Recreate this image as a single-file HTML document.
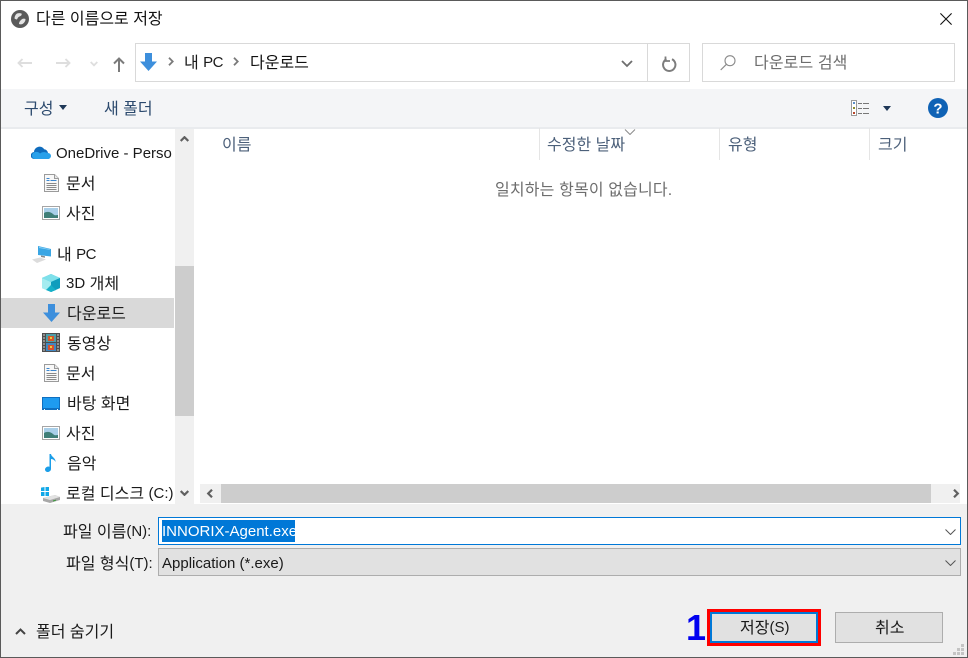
<!DOCTYPE html>
<html lang="ko"><head><meta charset="utf-8"><title>다른 이름으로 저장</title>
<style>
html,body{margin:0;padding:0;background:#fff}
#w{position:relative;width:968px;height:658px;overflow:hidden;background:#fff;font-family:"Liberation Sans","Noto Sans CJK KR",sans-serif;font-size:16px;color:#1a1a1a}
#w div,#w svg{position:absolute}
.t{white-space:nowrap;line-height:20px;height:20px}
.g{color:#6d6d6d}
.h{color:#4c607a}
.l{font-size:15px;position:relative;top:-1px}
</style></head><body><div id="w">
<!-- panels -->
<div style="left:0;top:89px;width:968px;height:38px;background:#f4f5f7"></div>
<div style="left:0;top:127px;width:968px;height:2px;background:#e9ebee"></div>
<div style="left:1px;top:504px;width:966px;height:153px;background:#f0f0f0"></div>
<!-- window border -->
<div style="left:0;top:0;width:966px;height:656px;border:1px solid #5a5a5a;z-index:9"></div>

<!-- title -->
<svg style="left:11px;top:10px" width="18" height="18" viewBox="0 0 18 18"><circle cx="9" cy="9" r="9" fill="#5a5a5a"/><path d="M6 3.500c1.500-.5 3-.5 4.500 0 .5 1 0 2-1 2.500S7 7 6.500 8.500 5 9.500 3.500 8.500C3.500 6.500 4.500 4.500 6 3.500zM14.500 9c0 2-1 3.800-3 5-1 .5-2.500.5-3.500 0 0-1.500.5-2.500 1.500-3.500S12 8 14.500 9z" fill="#e4e4e4"/></svg>
<div class="t" style="left:36px;top:10px;color:#111">다른 이름으로 저장</div>
<svg style="left:940px;top:13px" width="12" height="12" viewBox="0 0 12 12"><path d="M.4.400l11.200 11.200M11.600.400L.4 11.600" stroke="#111" stroke-width="1.100" fill="none"/></svg>

<!-- nav -->
<svg style="left:17px;top:58px" width="15" height="10" viewBox="0 0 15 10"><path d="M15 5H1.500M5.500 1L1.500 5l4 4" stroke="#dedede" stroke-width="1.900" fill="none"/></svg>
<svg style="left:56px;top:58px" width="15" height="10" viewBox="0 0 15 10"><path d="M0 5h13.500M9.500 1l4 4-4 4" stroke="#dedede" stroke-width="1.900" fill="none"/></svg>
<svg style="left:90px;top:61px" width="8" height="6" viewBox="0 0 8 6"><path d="M.7 1L4 4.300 7.300 1" stroke="#dedede" stroke-width="1.800" fill="none"/></svg>
<svg style="left:113px;top:57px" width="12" height="15" viewBox="0 0 12 15"><path d="M6 15V1.500M1 6.500l5-5 5 5" stroke="#7b7b7b" stroke-width="2" fill="none"/></svg>

<!-- address -->
<div style="left:135px;top:43px;width:553px;height:37px;border:1px solid #d9d9d9"></div>
<div style="left:647px;top:43px;width:1px;height:38px;background:#d9d9d9"></div>
<svg style="left:140px;top:53px" width="17" height="18" viewBox="0 0 17 18"><path d="M5 0h7v8.500h5L8.500 18 0 8.500h5z" fill="#3d8fdc"/></svg>
<svg style="left:168px;top:57px" width="6" height="9" viewBox="0 0 6 9"><path d="M1 .8l3.700 3.700L1 8.200" stroke="#7a7a7a" stroke-width="1.800" fill="none"/></svg>
<div class="t" style="left:184px;top:54px">내 <span class="l" style="letter-spacing:-.5px">PC</span></div>
<svg style="left:233px;top:57px" width="6" height="9" viewBox="0 0 6 9"><path d="M1 .8l3.700 3.700L1 8.200" stroke="#7a7a7a" stroke-width="1.800" fill="none"/></svg>
<div class="t" style="left:250px;top:54px;color:#111">다운로드</div>
<svg style="left:621px;top:60px" width="12" height="8" viewBox="0 0 12 8"><path d="M1 1l5 5 5-5" stroke="#6e6e6e" stroke-width="1.800" fill="none"/></svg>
<svg style="left:662px;top:56px" width="15" height="16" viewBox="0 0 15 16"><path d="M4.500 3.200A6.200 6.200 0 1 0 10 3.200" stroke="#7d7d7d" stroke-width="2" fill="none"/><path d="M3.500.5v4.500h4.500" stroke="#7d7d7d" stroke-width="1.800" fill="none"/></svg>

<!-- search -->
<div style="left:702px;top:43px;width:251px;height:37px;border:1px solid #d9d9d9"></div>
<svg style="left:720px;top:55px" width="16" height="16" viewBox="0 0 16 16"><circle cx="10" cy="5.700" r="5" stroke="#8a8a8a" stroke-width="1.100" fill="none"/><path d="M6.400 9.300L.7 15" stroke="#8a8a8a" stroke-width="1.200"/></svg>
<div class="t g" style="left:754px;top:54px;letter-spacing:.1px">다운로드 검색</div>

<!-- toolbar -->
<div class="t" style="left:24px;top:100px;color:#2c4a6e">구성</div>
<svg style="left:59px;top:105px" width="8" height="5" viewBox="0 0 8 5"><path d="M0 0h8L4 5z" fill="#1f3858"/></svg>
<div class="t" style="left:104px;top:100px;color:#2c4a6e">새 폴더</div>
<svg style="left:851px;top:100px" width="19" height="16" viewBox="0 0 19 16"><rect x=".5" y=".5" width="5" height="15" fill="#fff" stroke="#9a9a9a"/><rect x="2" y="2" width="2" height="2" fill="#5b8fc7"/><rect x="2" y="7" width="2" height="2" fill="#8c8c2a"/><rect x="2" y="12" width="2" height="2" fill="#b8452a"/><path d="M7 3.500h4M12 3.500h6M7 8.500h4M12 8.500h6M7 13.500h4M12 13.500h6" stroke="#777"/></svg>
<svg style="left:883px;top:106px" width="8" height="5" viewBox="0 0 8 5"><path d="M0 0h8L4 5z" fill="#1f3858"/></svg>
<svg style="left:928px;top:98px" width="20" height="20" viewBox="0 0 20 20"><circle cx="10" cy="10" r="10" fill="#0f62b5"/><text x="10" y="15.500" text-anchor="middle" font-family="Liberation Sans" font-weight="700" font-size="15" fill="#fff">?</text></svg>

<!-- sidebar -->
<div style="left:1px;top:298px;width:173px;height:30px;background:#d9d9d9"></div>
<div style="left:175px;top:129px;width:19px;height:375px;background:#f0f0f0"></div>
<div style="left:175px;top:266px;width:19px;height:150px;background:#cdcdcd"></div>
<svg style="left:180px;top:136px" width="9" height="6" viewBox="0 0 9 6"><path d="M.7 5l3.800-3.800L8.300 5" stroke="#606060" stroke-width="2.200" fill="none"/></svg>
<svg style="left:180px;top:490px" width="9" height="6" viewBox="0 0 9 6"><path d="M.7 1l3.800 3.800L8.300 1" stroke="#606060" stroke-width="2.200" fill="none"/></svg>

<svg style="left:31px;top:146px" width="20" height="13" viewBox="0 0 20 13"><path d="M3.500 13A3.500 3.500 0 0 1 3 6 5.500 5.500 0 0 1 13.200 3.300 4.200 4.200 0 0 1 17 7.500 2.800 2.800 0 0 1 17 13z" fill="#0f6cbd"/><path d="M3.500 13A3.500 3.500 0 0 1 3 6.500C5 5.500 7.500 5.800 9 7.500c1.500-1.500 4-2 8-.5A2.900 2.900 0 0 1 17 13z" fill="#28a0ea"/></svg>
<div class="t" style="left:56px;top:144px;font-size:15px">OneDrive - Perso</div>

<svg style="left:44px;top:174px" width="15" height="18" viewBox="0 0 15 18"><path d="M.5.500h10l4 4v13H.5z" fill="#f8f8f8" stroke="#9b9b9b"/><path d="M10.500.5v4h4" fill="#e8e8e8" stroke="#9b9b9b"/><path d="M2.500 4.500h3M6.500 6.500h6M2.500 6.500h3" stroke="#3a86cf"/><path d="M2.500 9.500h10M2.500 11.500h10M2.500 13.500h10M2.500 15.500h10" stroke="#8a8a8a"/></svg>
<div class="t" style="left:66px;top:175px">문서</div>

<svg style="left:42px;top:206px" width="18" height="14" viewBox="0 0 18 14"><rect x=".5" y=".5" width="17" height="13" fill="#fff" stroke="#a5a5a5"/><rect x="2" y="2" width="14" height="10" fill="#a9cfe9"/><path d="M2 7c3-2 7-1 9 1s3 1 5 1v3H2z" fill="#3f7f78"/></svg>
<div class="t" style="left:66px;top:205px">사진</div>

<svg style="left:32px;top:246px" width="20" height="17" viewBox="0 0 20 17"><path d="M6 0l13 3v7.500L6 9z" fill="#3aa6e4"/><path d="M7 .9l11 2.500v.5L7 2z" fill="#8ad0f5"/><path d="M9 9.500l4 .7v1.500l-4-.7z" fill="#8a8a8a"/><path d="M0 13.500l8-2 6 2-9 3.500z" fill="#dcdcdc"/></svg>
<div class="t" style="left:57px;top:246px">내 <span class="l" style="letter-spacing:-.5px">PC</span></div>

<svg style="left:42px;top:274px" width="18" height="18" viewBox="0 0 18 18"><path d="M9 0l9 4v10l-9 4-9-4V4z" fill="#27bcd0"/><path d="M0 4l9-4 9 4-9 4z" fill="#7fe0ea"/><path d="M0 4l9 4v10l-9-4z" fill="#a5ecf0"/><path d="M18 4L9 8v10l9-4z" fill="#0f9dbd"/><path d="M4 16l5-5 5 5-5 2z" fill="#16b0c8"/></svg>
<div class="t" style="left:66px;top:275px"><span class="l">3D</span> 개체</div>

<svg style="left:43px;top:304px" width="17" height="18" viewBox="0 0 17 18"><path d="M5 0h7v8.500h5L8.500 18 0 8.500h5z" fill="#3d8fdc"/></svg>
<div class="t" style="left:67px;top:305px">다운로드</div>

<svg style="left:42px;top:333px" width="18" height="19" viewBox="0 0 18 19"><rect width="18" height="19" fill="#4e4e4e"/><rect x="4" y="1" width="10" height="8" fill="#4f9ea8"/><rect x="4" y="10" width="10" height="8" fill="#4188c2"/><rect x="6" y="3" width="6" height="5" fill="#d8552a"/><rect x="6" y="12" width="6" height="5" fill="#d9502e"/><rect x="8" y="4" width="2" height="2" fill="#e6d03a"/><rect x="8" y="13" width="2" height="2" fill="#e6d03a"/><path d="M1.500 2h1M1.500 5h1M1.500 8h1M1.500 11h1M1.500 14h1M1.500 17h1M15.500 2h1M15.500 5h1M15.500 8h1M15.500 11h1M15.500 14h1M15.500 17h1" stroke="#fff" stroke-width="1.500"/></svg>
<div class="t" style="left:67px;top:335px">동영상</div>

<svg style="left:44px;top:364px" width="15" height="18" viewBox="0 0 15 18"><path d="M.5.500h10l4 4v13H.5z" fill="#f8f8f8" stroke="#9b9b9b"/><path d="M10.500.5v4h4" fill="#e8e8e8" stroke="#9b9b9b"/><path d="M2.500 4.500h3M6.500 6.500h6M2.500 6.500h3" stroke="#3a86cf"/><path d="M2.500 9.500h10M2.500 11.500h10M2.500 13.500h10M2.500 15.500h10" stroke="#8a8a8a"/></svg>
<div class="t" style="left:66px;top:365px">문서</div>

<svg style="left:42px;top:397px" width="18" height="13" viewBox="0 0 18 13"><rect width="18" height="13" fill="#0f6fc0"/><rect x="1" y="1" width="16" height="10" fill="#1e9bf0"/><path d="M2 12.500h1M15 12.500h1" stroke="#fff"/></svg>
<div class="t" style="left:67px;top:395px">바탕 화면</div>

<svg style="left:42px;top:426px" width="18" height="14" viewBox="0 0 18 14"><rect x=".5" y=".5" width="17" height="13" fill="#fff" stroke="#a5a5a5"/><rect x="2" y="2" width="14" height="10" fill="#a9cfe9"/><path d="M2 7c3-2 7-1 9 1s3 1 5 1v3H2z" fill="#3f7f78"/></svg>
<div class="t" style="left:66px;top:425px">사진</div>

<svg style="left:45px;top:454px" width="11" height="18" viewBox="0 0 11 18"><path d="M4.500 0H6c.3 3 5 4 4.500 8C10 6.500 8 5 6 5v10c0 1.800-1.800 3-3.200 3S0 17 0 15.500 1.800 12.500 3.200 12.500c.5 0 1 .1 1.300.3z" fill="#1b9ee8"/></svg>
<div class="t" style="left:67px;top:455px">음악</div>

<svg style="left:41px;top:487px" width="20" height="16" viewBox="0 0 20 16"><path d="M0 .6L3.500 0v4H0zM4.500 0H8v4H4.500zM0 5h3.500v4H0zM4.500 5H8v4H4.500z" fill="#12a8e8"/><path d="M2 11l12-3 5 2v3l-10 3-7-2z" fill="#a8a8a8"/><path d="M2 11l7 2 10-3-5-2z" fill="#e2e2e2"/><path d="M12 14l3-.9" stroke="#3a9a3a"/></svg>
<div class="t" style="left:66px;top:485px">로컬 디스크 <span class="l">(C:)</span></div>

<!-- file list -->
<div class="t h" style="left:222px;top:136px">이름</div>
<div class="t h" style="left:547px;top:136px">수정한 날짜</div>
<div class="t h" style="left:728px;top:136px">유형</div>
<div class="t h" style="left:878px;top:136px">크기</div>
<div style="left:539px;top:128px;width:1px;height:32px;background:#e5e5e5"></div>
<div style="left:719px;top:128px;width:1px;height:32px;background:#e5e5e5"></div>
<div style="left:869px;top:128px;width:1px;height:32px;background:#e5e5e5"></div>
<svg style="left:624px;top:129px" width="12" height="6" viewBox="0 0 12 6"><path d="M1 .5l5 5 5-5" stroke="#8a8a8a" fill="none"/></svg>
<div class="t g" style="left:495px;top:181px;letter-spacing:.15px">일치하는 항목이 없습니다.</div>

<!-- h scrollbar -->
<div style="left:200px;top:484px;width:760px;height:19px;background:#f0f0f0"></div>
<div style="left:221px;top:484px;width:710px;height:19px;background:#cdcdcd"></div>
<svg style="left:206px;top:489px" width="7" height="9" viewBox="0 0 7 9"><path d="M6 .7L2.200 4.500 6 8.300" stroke="#606060" stroke-width="2.200" fill="none"/></svg>
<svg style="left:953px;top:489px" width="7" height="9" viewBox="0 0 7 9"><path d="M1 .7l3.800 3.800L1 8.300" stroke="#606060" stroke-width="2.200" fill="none"/></svg>

<!-- bottom -->
<div class="t" style="left:63px;top:523px">파일 이름<span class="l">(N):</span></div>
<div style="left:158px;top:517px;width:801px;height:26px;border:1px solid #0078d7;background:#fff"></div>
<div style="left:162px;top:520px;width:133px;height:22px;background:#0078d7"></div>
<div class="t" style="left:162px;top:522px;color:#fff;font-size:15px">INNORIX-Agent.exe</div>
<svg style="left:945px;top:529px" width="11" height="6" viewBox="0 0 11 6"><path d="M.5.500l5 5 5-5" stroke="#555" fill="none"/></svg>
<div class="t" style="left:66px;top:555px">파일 형식<span class="l">(T):</span></div>
<div style="left:158px;top:548px;width:801px;height:26px;border:1px solid #adadad;background:#e1e1e1"></div>
<div class="t" style="left:162px;top:554px;font-size:15px">Application (*.exe)</div>
<svg style="left:945px;top:560px" width="11" height="6" viewBox="0 0 11 6"><path d="M.5.500l5 5 5-5" stroke="#555" fill="none"/></svg>

<svg style="left:15px;top:628px" width="11" height="7" viewBox="0 0 11 7"><path d="M1 6l4.500-4.500L10 6" stroke="#444" stroke-width="2" fill="none"/></svg>
<div class="t" style="left:36px;top:623px">폴더 숨기기</div>

<div style="left:686px;top:609px;font:700 36px/38px 'Liberation Sans',sans-serif;color:#0000f0">1</div>
<div style="left:707px;top:609px;width:108px;height:31px;border:3px solid #f00"></div>
<div style="left:710px;top:612px;width:104px;height:27px;border:2px solid #0078d7;background:#e1e1e1"></div>
<div class="t" style="left:740px;top:619px">저장<span class="l">(S)</span></div>
<div style="left:835px;top:612px;width:106px;height:29px;border:1px solid #adadad;background:#e1e1e1"></div>
<div class="t" style="left:875px;top:619px">취소</div>
<svg style="left:953px;top:644px" width="12" height="12" viewBox="0 0 12 12"><path d="M8 0h3v3H8zM4 4h3v3H4zM8 4h3v3H8zM0 8h3v3H0zM4 8h3v3H4zM8 8h3v3H8z" fill="#c4c4c4"/></svg>
</div></body></html>
